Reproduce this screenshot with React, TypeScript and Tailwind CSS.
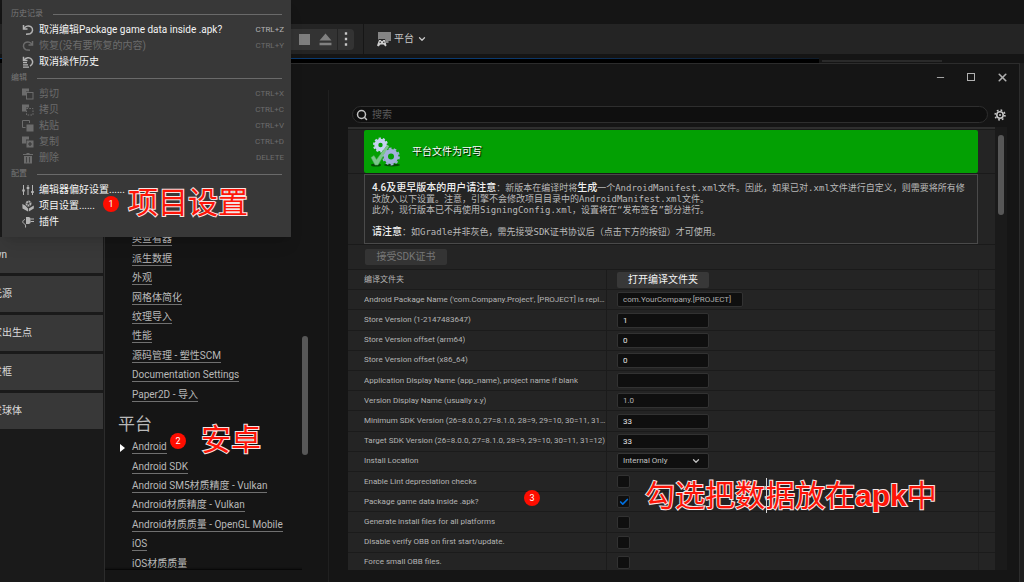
import React from 'react';
import { Check, ChevronDown, Minus, Search, Square, X } from 'lucide-react';

interface MenuItem {
  label: string;
  shortcut?: string;
  disabled?: boolean;
  icon: React.ReactNode;
}

interface MenuSection {
  title: string;
  items: MenuItem[];
}

const Icon: React.FC<{ children: React.ReactNode; className?: string }> = ({ children, className = 'size-3' }) => (
  <svg viewBox="0 0 12 12" className={`${className} shrink-0`} fill="none" stroke="currentColor" strokeWidth="1.5" aria-hidden="true">
    {children}
  </svg>
);

const UndoIcon = (
  <Icon>
    <path d="M1.500 1v4h4" />
    <path d="M1.800 4.800C3.500 2 6.500 1.200 8.800 2.600C11.500 4.500 11 8.500 8 9.800C7 10.200 6 10.200 4 10.200" />
  </Icon>
);

const RedoIcon = (
  <Icon>
    <path d="M10.500 1v4h-4" />
    <path d="M10.200 4.800C8.500 2 5.500 1.200 3.200 2.600C.5 4.500 1 8.500 4 9.800C5 10.200 6 10.200 8 10.200" />
  </Icon>
);

const HistoryIcon = (
  <Icon>
    <path d="M1.500 .8v3.700h4" />
    <path d="M2 4.200C4 1.200 7.500 1 9.500 3.200C11.500 5.500 10.800 8.500 8 10" />
    <path d="M1 6.700h4M1 8.900h5M1 11.100h6" strokeWidth="1.200" />
  </Icon>
);

const CutIcon = (
  <Icon>
    <path d="M0 .5h7v3h-3v4h-4z" fill="currentColor" stroke="none" />
    <rect x="4.500" y="4.500" width="6.500" height="6.500" strokeWidth="1" />
  </Icon>
);

const CopyIcon = (
  <Icon>
    <path d="M0 .5h7v3h-3v4h-4z" fill="currentColor" stroke="none" />
    <rect x="4.500" y="4.500" width="6.500" height="6.500" strokeWidth="1" strokeDasharray="1.600 1.200" />
  </Icon>
);

const PasteIcon = (
  <Icon>
    <path d="M3.500 7.500h-3v-7h7v2.500" strokeWidth="1" />
    <rect x="4.500" y="4.500" width="7" height="7" fill="currentColor" stroke="none" />
  </Icon>
);

const DuplicateIcon = (
  <Icon>
    <path d="M0 .5h7v3h-3v4h-4z" fill="currentColor" stroke="none" />
    <rect x="4.500" y="4.500" width="7" height="7" fill="currentColor" stroke="none" />
    <path d="M8 6v4M6 8h4" stroke="#383838" strokeWidth="1.200" />
  </Icon>
);

const TrashIcon = (
  <Icon>
    <path d="M1 2.500h10M4.500 1.500h3" strokeWidth="1" />
    <path d="M2 4h8v7.500H2z" fill="currentColor" stroke="none" />
    <path d="M4.500 5v5.500M7.500 5v5.500" stroke="#383838" strokeWidth=".8" />
  </Icon>
);

const SlidersIcon = (
  <Icon>
    <path d="M1.500 1v10M6 1v10M10.500 1v10" strokeWidth="1" />
    <path d="M.2 6.500h2.600M4.700 4h2.600M9.200 8h2.600" strokeWidth="2" />
  </Icon>
);

const ProjectIcon = (
  <Icon>
    <circle cx="6.500" cy="3.500" r="2" strokeWidth="2" strokeDasharray="1.600 .5" />
    <path d="M.3 4l3 1.500 2.700 3v3l-5.500-3zM11.800 5.500l-5 3v3l5-3z" fill="currentColor" stroke="none" />
  </Icon>
);

const PluginIcon = (
  <Icon>
    <path d="M4 1h3l1.500 1v5l-1.500 1h-3z" fill="currentColor" stroke="none" />
    <path d="M8.500 3H12M8.500 5.500H12" strokeWidth="1" />
    <path d="M3 3.500C1 4 0 6 1.500 7.200C3 8 4 9 3.500 11.500" strokeWidth="1" />
  </Icon>
);

const menuSections: MenuSection[] = [
  {
    title: '历史记录',
    items: [
      { label: '取消编辑Package game data inside .apk?', shortcut: 'CTRL+Z', icon: UndoIcon },
      { label: '恢复(没有要恢复的内容)', shortcut: 'CTRL+Y', disabled: true, icon: RedoIcon },
      { label: '取消操作历史', icon: HistoryIcon },
    ],
  },
  {
    title: '编辑',
    items: [
      { label: '剪切', shortcut: 'CTRL+X', disabled: true, icon: CutIcon },
      { label: '拷贝', shortcut: 'CTRL+C', disabled: true, icon: CopyIcon },
      { label: '粘贴', shortcut: 'CTRL+V', disabled: true, icon: PasteIcon },
      { label: '复制', shortcut: 'CTRL+D', disabled: true, icon: DuplicateIcon },
      { label: '删除', shortcut: 'DELETE', disabled: true, icon: TrashIcon },
    ],
  },
  {
    title: '配置',
    items: [
      { label: '编辑器偏好设置......', icon: SlidersIcon },
      { label: '项目设置......', icon: ProjectIcon },
      { label: '插件', icon: PluginIcon },
    ],
  },
];

const engineLinks = [
  '类查看器',
  '派生数据',
  '外观',
  '网格体简化',
  '纹理导入',
  '性能',
  '源码管理 - 塑性SCM',
  'Documentation Settings',
  'Paper2D - 导入',
];

const platformLinks = [
  'Android',
  'Android SDK',
  'Android SM5材质精度 - Vulkan',
  'Android材质精度 - Vulkan',
  'Android材质质量 - OpenGL Mobile',
  'iOS',
  'iOS材质质量',
];

const actors = [
  { name: 'wn', width: 'w-[7px]' },
  { name: '光源', width: 'w-3' },
  { name: '家出生点', width: 'w-8' },
  { name: '发框', width: 'w-3' },
  { name: '发球体', width: 'w-[22px]' },
];

interface Setting {
  id: string;
  label: string;
  kind: 'button' | 'text' | 'select' | 'check';
  value?: string;
  wide?: boolean;
  dim?: boolean;
  checked?: boolean;
}

const settings: Setting[] = [
  { id: 'build-folder', label: '编译文件夹', kind: 'button', value: '打开编译文件夹' },
  { id: 'package-name', label: "Android Package Name ('com.Company.Project', [PROJECT] is replaced with project name)", kind: 'text', value: 'com.YourCompany.[PROJECT]', wide: true, dim: true },
  { id: 'store-version', label: 'Store Version (1-2147483647)', kind: 'text', value: '1' },
  { id: 'offset-arm64', label: 'Store Version offset (arm64)', kind: 'text', value: '0' },
  { id: 'offset-x86', label: 'Store Version offset (x86_64)', kind: 'text', value: '0' },
  { id: 'app-name', label: 'Application Display Name (app_name), project name if blank', kind: 'text', value: '' },
  { id: 'version-name', label: 'Version Display Name (usually x.y)', kind: 'text', value: '1.0', dim: true },
  { id: 'min-sdk', label: 'Minimum SDK Version (26=8.0.0, 27=8.1.0, 28=9, 29=10, 30=11, 31=12)', kind: 'text', value: '33' },
  { id: 'target-sdk', label: 'Target SDK Version (26=8.0.0, 27=8.1.0, 28=9, 29=10, 30=11, 31=12)', kind: 'text', value: '33' },
  { id: 'install-location', label: 'Install Location', kind: 'select', value: 'Internal Only' },
  { id: 'lint', label: 'Enable Lint depreciation checks', kind: 'check' },
  { id: 'package-data', label: 'Package game data inside .apk?', kind: 'check', checked: true },
  { id: 'install-files', label: 'Generate install files for all platforms', kind: 'check' },
  { id: 'verify-obb', label: 'Disable verify OBB on first start/update.', kind: 'check' },
  { id: 'small-obb', label: 'Force small OBB files.', kind: 'check' },
];

const EditMenu: React.FC = () => (
  <div role="menu" className="absolute top-0 left-[2px] z-20 w-[289px] bg-[#383838] pt-[6px] pb-[7px] shadow-lg">
    {menuSections.map((section) => (
      <section key={section.title}>
        <div className="flex h-4 items-center gap-[10px] pr-[9px] pl-[9px]">
          <h3 className="text-[8px] leading-none text-[#777]">{section.title}</h3>
          <div className="h-px flex-1 bg-[#6a6a6a]" />
        </div>
        {section.items.map((item) => (
          <button
            key={item.label}
            type="button"
            role="menuitem"
            disabled={item.disabled}
            className={`flex h-4 w-full items-center gap-[5px] pr-[7px] pl-5 text-left ${item.disabled ? 'text-[#6c6c6c]' : 'text-[#b4b4b4]'}`}
          >
            {item.icon}
            <span className={`flex-1 text-[10px] leading-none whitespace-nowrap ${item.disabled ? '' : 'text-[#f4f4f4]'}`}>{item.label}</span>
            <span className="text-[8px] leading-none">{item.shortcut}</span>
          </button>
        ))}
      </section>
    ))}
  </div>
);

const Toolbar: React.FC = () => (
  <div className="flex h-[30px] items-center bg-[#242424] pl-[280px]">
    <div className="flex h-[21px] items-center rounded-r bg-[#333] pl-[15px] text-[#808080]">
      <button type="button" aria-label="停止" className="flex h-full w-[18px] items-center justify-center">
        <span className="size-[11px] bg-[#7e7e7e]" />
      </button>
      <button type="button" aria-label="弹出" className="flex h-full w-[25px] items-center justify-center border-r border-[#242424]">
        <Icon className="size-[13px]">
          <path d="M6 .5l5.500 6.500H.5zM.5 9h11v2.200H.5z" fill="currentColor" stroke="none" />
        </Icon>
      </button>
      <button type="button" aria-label="更多" className="flex h-full w-4 items-center justify-center text-[#c8c8c8]">
        <Icon className="size-[14px]">
          <path d="M5 .3h2v2H5zM5 5h2v2H5zM5 9.700h2v2H5z" fill="currentColor" stroke="none" />
        </Icon>
      </button>
    </div>
    <div className="ml-[9px] h-full w-px bg-[#161616]" />
    <button type="button" className="ml-3 flex items-center gap-[3px] text-[10px] leading-none text-[#c8c8c8]">
      <svg viewBox="0 0 15 15" className="size-[15px]" aria-hidden="true">
        <path d="M2 0h13v9h-2.500v2H10L9 7H3L2 8z" fill="#858585" />
        <path d="M3 8h1.800l.7 1h1l.7-1H9l1.500 5.500-1 1L7.500 12.500h-3l-2 2-1.500-1z" fill="#cdcdcd" />
        <circle cx="4.200" cy="10.300" r=".8" fill="#333" />
        <circle cx="7.800" cy="10.300" r=".8" fill="#333" />
      </svg>
      平台
      <ChevronDown className="size-[10px]" strokeWidth={3} />
    </button>
  </div>
);

const NavLinks: React.FC<{ links: string[]; current?: string }> = ({ links, current }) => (
  <ul className={`flex flex-col ${links.length === 9 ? 'flex-[9]' : 'flex-[7]'}`}>
    {links.map((link) => (
      <li key={link} className="relative flex flex-1 items-center pl-[27px]">
        {link === current && (
          <svg viewBox="0 0 5 8" className="absolute left-[15px] h-2 w-[5px]" aria-hidden="true">
            <path d="M0 0l5 4-5 4z" fill="#fff" />
          </svg>
        )}
        <a href="#" className="border-b border-[#707070] text-[10px] leading-3 whitespace-nowrap text-[#b9b9b9]">
          {link}
        </a>
      </li>
    ))}
  </ul>
);

const SideNav: React.FC = () => (
  <nav className="flex w-[224px] shrink-0 border-r border-[#202020] pb-3">
    <div className="flex flex-1 flex-col overflow-hidden pt-[140px] shadow-[inset_0_-3px_2px_-2px_#050505]">
      <div className="-mb-1 flex flex-1 flex-col">
        <NavLinks links={engineLinks} />
        <h2 className="h-[33px] pl-[13px] text-[17px] leading-[38px] text-[#b9b9b9]">平台</h2>
        <NavLinks links={platformLinks} current="Android" />
      </div>
    </div>
    <div className="mt-[246px] mr-5 h-[119px] w-[6px] rounded-full bg-[#575757]" />
  </nav>
);

const SettingControl: React.FC<{ setting: Setting }> = ({ setting }) => {
  switch (setting.kind) {
    case 'button':
      return (
        <button id={setting.id} type="button" className="h-4 w-[92px] rounded-xs bg-[#383838] text-[10px] leading-none text-[#f4f4f4]">
          {setting.value}
        </button>
      );
    case 'select':
      return (
        <div className="relative">
          <select id={setting.id} className="block h-4 w-[92px] appearance-none rounded-xs border border-[#353535] bg-[#0f0f0f] px-[5px] text-[8px] leading-none text-[#c0c0c0]">
            <option>{setting.value}</option>
          </select>
          <ChevronDown className="pointer-events-none absolute top-[3px] right-2 size-[10px] text-[#c0c0c0]" strokeWidth={3} />
        </div>
      );
    case 'check':
      return (
        <div className="relative size-[13px]">
          <input id={setting.id} type="checkbox" defaultChecked={setting.checked} className="peer block size-[13px] appearance-none rounded-xs border border-[#323232] bg-[#0f0f0f]" />
          <Check className="pointer-events-none absolute top-[2px] left-[2px] hidden size-[10px] text-[#0070e0] peer-checked:block" strokeWidth={4} />
        </div>
      );
    default:
      return (
        <input
          id={setting.id}
          type="text"
          defaultValue={setting.value}
          className={`h-[15px] rounded-xs border border-[#323232] bg-[#0f0f0f] px-[5px] text-[8px] leading-none ${setting.wide ? 'w-[126px]' : 'w-[92px]'} ${setting.dim ? 'text-[#b0b0b0]' : 'text-[#e4e4e4]'}`}
        />
      );
  }
};

const GearsIcon: React.FC = () => (
  <svg viewBox="0 0 30 30" className="size-[30px]" aria-hidden="true">
    <ellipse cx="6" cy="28" rx="5" ry="1.500" fill="#044d04" />
    <ellipse cx="22" cy="28" rx="8" ry="1.500" fill="#044d04" />
    <g fill="none" stroke="#c6d2f2">
      <circle cx="10.500" cy="8" r="4.200" strokeWidth="4" />
      <circle cx="10.500" cy="8" r="6.600" strokeWidth="1.800" strokeDasharray="2.300 1.847" />
    </g>
    <path d="M1 20.500l3-2 2.500 4L17 8.500l2 .5L8 28H5z" fill="#7cc68a" stroke="#4fa65c" strokeWidth=".5" />
    <g fill="none" stroke="#a3b0dc">
      <circle cx="21" cy="19.500" r="5.200" strokeWidth="4.400" />
      <circle cx="21" cy="19.500" r="8" strokeWidth="1.800" strokeDasharray="2.800 2.227" />
    </g>
    <path d="M11 17l6.500-8.500 1.500.5-6 10z" fill="#7cc68a" />
  </svg>
);

const Strong: React.FC<{ children: React.ReactNode }> = ({ children }) => (
  <strong className="font-['Roboto','Noto_Sans_CJK_SC',sans-serif] text-[10px] leading-none font-medium text-[#f0f0f0]">{children}</strong>
);

const SettingsPanel: React.FC = () => (
  <main className="flex min-w-0 flex-1 flex-col pb-3 pl-[19px]">
    <div className="flex items-center gap-[6px] pt-4 pr-[13px] pl-1">
      <label className="flex h-[17px] flex-1 items-center gap-1 rounded-full border border-[#2e2e2e] bg-[#0f0f0f] pl-[3px]">
        <Search className="size-3 text-[#c0c0c0]" strokeWidth={3} />
        <input type="search" aria-label="搜索" placeholder="搜索" className="min-w-0 flex-1 text-[10px] leading-none text-[#c0c0c0] placeholder:text-[#5a5a5a]" />
      </label>
      <button type="button" aria-label="设置" className="text-[#c4c4c4]">
        <Icon>
          <circle cx="6" cy="6" r="3.200" strokeWidth="1.600" />
          <circle cx="6" cy="6" r="4.900" strokeWidth="1.600" strokeDasharray="1.700 2.148" />
          <circle cx="6" cy="6" r="1" fill="currentColor" stroke="none" />
        </Icon>
      </button>
    </div>
    <div className="mt-1 flex min-h-0 flex-1 pr-3">
      <div className="flex min-w-0 flex-1 flex-col overflow-hidden border-t-2 border-[#2f2f2f] bg-[#242424]">
        <div className="flex border-y border-[#1a1a1a] pl-4">
          <div className="flex h-[43px] flex-1 items-center gap-3 rounded-xs bg-[#03a003] pl-[6px] text-[10px] text-white">
            <GearsIcon />
            <span className="[text-shadow:1px_1px_1px_#000]">平台文件为可写</span>
          </div>
          <div className="w-[17px]" />
        </div>
        <div className="flex border-b border-[#1a1a1a] pl-4">
          <div className="flex-1 border border-[#4a4a4a] px-[7px] pt-2 pb-[5px] font-['DejaVu_Sans_Mono','Noto_Sans_CJK_SC',monospace] text-[9px] leading-[11px] text-[#b9b9b9]">
            <p>
              <Strong>4.6及更早版本的用户请注意</Strong>：新版本在编译时将<Strong>生成</Strong>一个AndroidManifest.xml文件。因此，如果已对.xml文件进行自定义，则需要将所有修改放入以下设置。注意，引擎不会修改项目目录中的AndroidManifest.xml文件。
            </p>
            <p>此外，现行版本已不再使用SigningConfig.xml，设置将在“发布签名”部分进行。</p>
            <p className="mt-[11px]">
              <Strong>请注意</Strong>：如Gradle并非灰色，需先接受SDK证书协议后（点击下方的按钮）才可使用。
            </p>
          </div>
          <div className="w-[17px]" />
        </div>
        <div className="flex items-center border-b border-[#1a1a1a] py-1 pl-[17px]">
          <button type="button" disabled className="h-4 w-[82px] rounded-xs bg-[#343434] text-[10px] leading-none text-[#777]">
            接受SDK证书
          </button>
        </div>
        <div className="-mb-[3px] flex flex-1 flex-col">
          {settings.map((setting) => (
            <div key={setting.id} className="flex flex-1 items-stretch border-b border-[#1b1b1b]">
              <div className="flex w-[259px] items-center border-r border-[#1b1b1b] pl-4">
                <label htmlFor={setting.id} className="truncate text-[8px] leading-[10px] text-[#b4b4b4]">
                  {setting.label}
                </label>
              </div>
              <div className="flex flex-1 items-center pl-[10px]">
                <SettingControl setting={setting} />
              </div>
              <div className="w-[17px] border-l border-[#1e1e1e]" />
            </div>
          ))}
        </div>
      </div>
      <div className="w-3 bg-[#1a1a1a] pt-2 pl-[3px]">
        <div className="h-20 w-[6px] rounded-full bg-[#575757]" />
      </div>
    </div>
  </main>
);

const badge = 'absolute z-30 flex size-4 items-center justify-center rounded-full bg-[#fe0d00] text-[9px] leading-none text-white';
const note =
  "absolute z-30 text-[30px] leading-9 whitespace-nowrap text-[#fe1508] font-['Liberation_Sans','Noto_Sans_CJK_SC',sans-serif] [-webkit-text-stroke:2px_#f4e4e4] [paint-order:stroke_fill]";

const App: React.FC = () => (
  <div className="relative flex h-screen flex-col overflow-hidden bg-[#151515] font-['Roboto','Noto_Sans_CJK_SC',sans-serif]">
    <div className="h-6" />
    <Toolbar />
    <div className="mt-1 h-px w-4/5 bg-gradient-to-r from-[#0a3a70] from-60% to-[#101c2a]" />
    <div className="flex h-[4px] items-center gap-[3px]">
      <div className="h-full w-4/5 bg-black" />
      <div className="h-[2px] w-[120px] bg-[#2a2a2a]" />
    </div>

    <div className="flex min-h-0 flex-1">
      <aside className="w-[104px] shrink-0 bg-[#1a1a1a] pt-[174px] pr-px">
        <ul className="flex flex-col gap-[3px]">
          {actors.map((actor) => (
            <li key={actor.name} className="flex h-9 items-center bg-[#383838] text-[10px] leading-3 text-[#dcdcdc]">
              <span className={`flex justify-end overflow-hidden whitespace-nowrap ${actor.width}`}>{actor.name}</span>
            </li>
          ))}
        </ul>
      </aside>

      <div className="flex min-w-0 flex-1 flex-col border border-b-0 border-[#2c2c2c] bg-[#151515]">
        <div className="flex h-[26px] items-center justify-end gap-5 pr-[10px] text-[#b0b0b0]">
          <button type="button" aria-label="最小化">
            <Minus className="size-[11px]" strokeWidth={2} />
          </button>
          <button type="button" aria-label="最大化">
            <svg viewBox="0 0 10 10" className="size-[10px]" aria-hidden="true">
              <rect x="1.500" y="1.500" width="7" height="7" fill="none" stroke="currentColor" />
            </svg>
          </button>
          <button type="button" aria-label="关闭">
            <X className="size-[13px]" strokeWidth={3} />
          </button>
        </div>
        <div className="flex min-h-0 flex-1">
          <SideNav />
          <SettingsPanel />
        </div>
      </div>

      <div className="w-1 shrink-0 bg-[#1e1e1e]" />
    </div>

    <EditMenu />

    <span className={`${badge} top-[196px] left-[103px]`}>1</span>
    <span className={`${note} top-[185px] left-[128px]`}>项目设置</span>
    <span className={`${badge} top-[433px] left-[170px]`}>2</span>
    <span className={`${note} top-[422px] left-[201px]`}>安卓</span>
    <span className={`${badge} top-[490px] left-[524px]`}>3</span>
    <span className={`${note} top-[478px] left-[645px]`}>
      勾选把数
      <span className="absolute top-0 ml-px h-[35px] w-px bg-[#d8d8d8]" />
      据放在<b>apk</b>中
    </span>
  </div>
);

export default App;
